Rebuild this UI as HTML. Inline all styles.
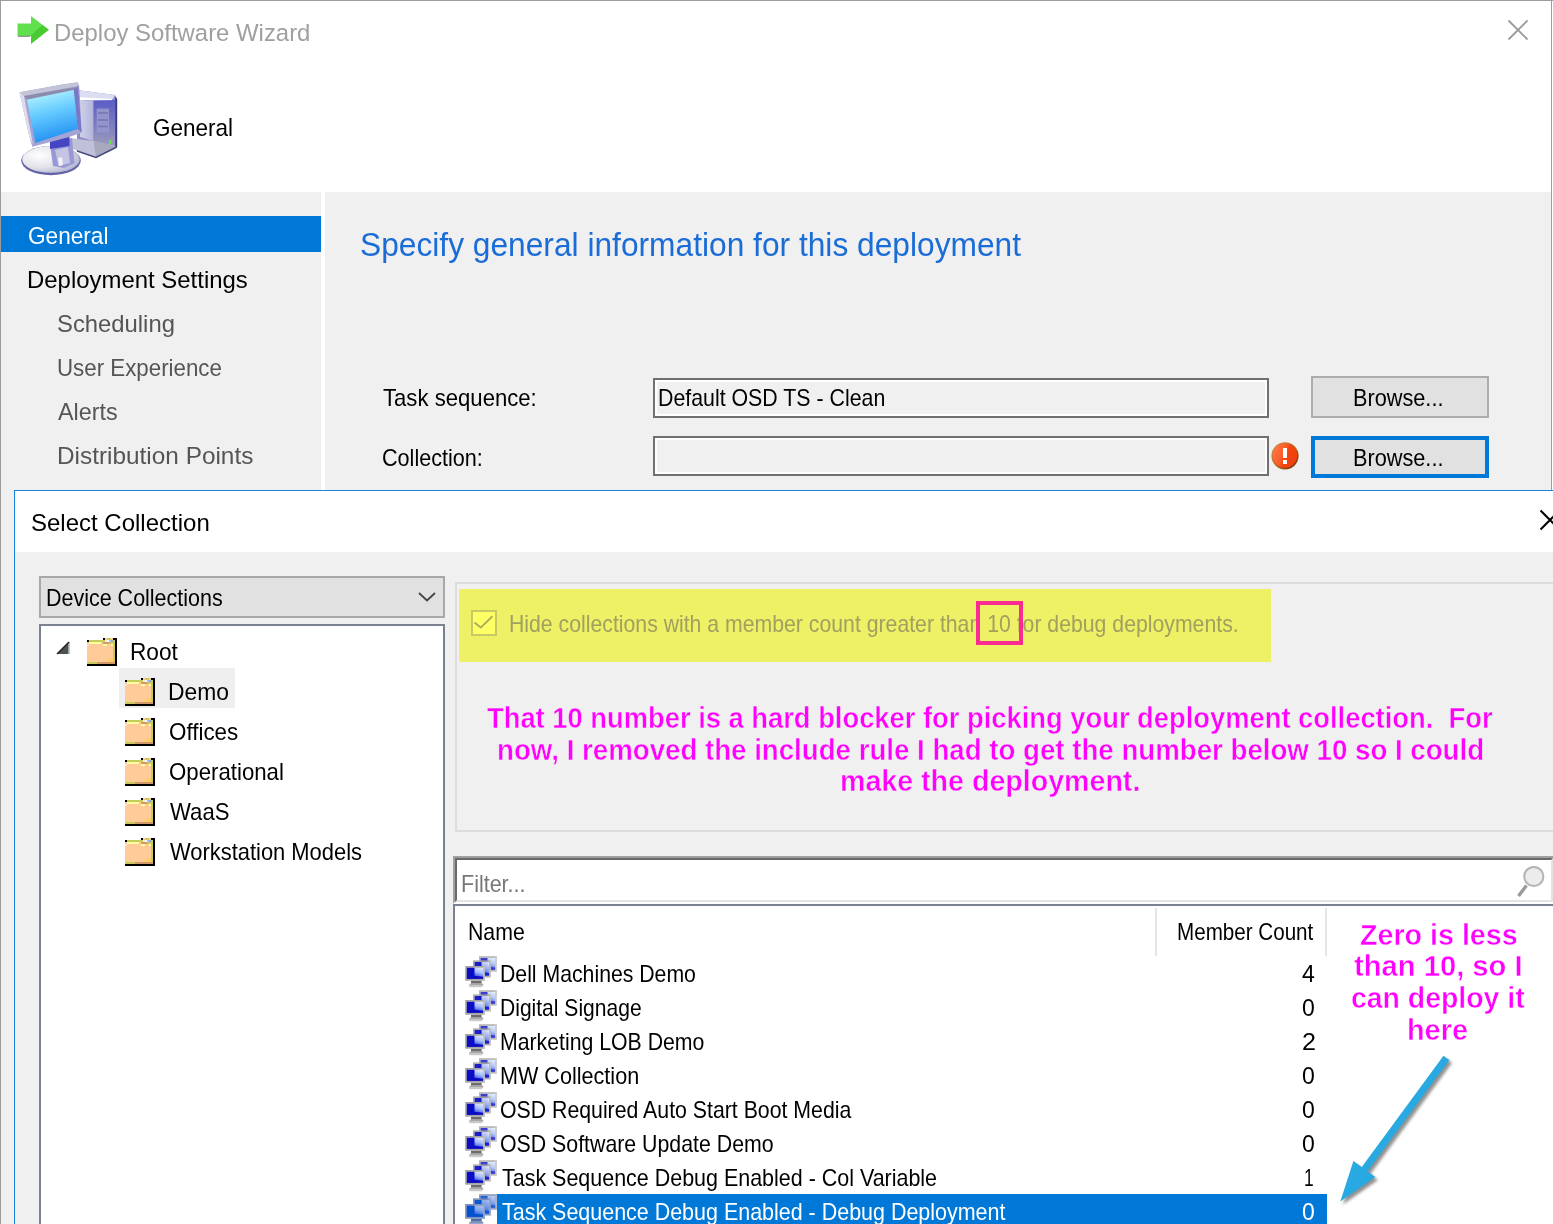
<!DOCTYPE html>
<html lang="en"><head><meta charset="utf-8"><title>Deploy Software Wizard</title>
<style>
html,body{margin:0;padding:0;}
body{width:1553px;height:1224px;position:relative;overflow:hidden;background:#fff;font-family:"Liberation Sans",sans-serif;}
.a{position:absolute;box-sizing:border-box;}
.t{position:absolute;white-space:pre;transform-origin:0 0;font-family:"Liberation Sans",sans-serif;}
svg{position:absolute;overflow:visible;}

</style></head>
<body>
<svg width="0" height="0" style="position:absolute"><defs><symbol id="fold" viewBox="0 0 30 28"><rect x="16" y="0" width="2" height="2" fill="#000000"/><rect x="18" y="0" width="2" height="2" fill="#ffcc99"/><rect x="20" y="0" width="4" height="2" fill="#c8cc5c"/><rect x="24" y="0" width="2" height="2" fill="#ffcc99"/><rect x="26" y="0" width="4" height="2" fill="#000000"/><rect x="0" y="2" width="2" height="2" fill="#000000"/><rect x="2" y="2" width="16" height="2" fill="#c8cc5c"/><rect x="18" y="2" width="2" height="2" fill="#ffe8e0"/><rect x="20" y="2" width="2" height="2" fill="#ffffff"/><rect x="22" y="2" width="2" height="2" fill="#a0c0ff"/><rect x="24" y="2" width="2" height="2" fill="#a0a8c0"/><rect x="26" y="2" width="2" height="2" fill="#c8cc5c"/><rect x="28" y="2" width="2" height="2" fill="#000000"/><rect x="0" y="4" width="2" height="2" fill="#ffcc99"/><rect x="2" y="4" width="12" height="2" fill="#ffff99"/><rect x="14" y="4" width="2" height="2" fill="#ffcc99"/><rect x="16" y="4" width="6" height="2" fill="#d2996a"/><rect x="22" y="4" width="6" height="2" fill="#c8cc5c"/><rect x="28" y="4" width="2" height="2" fill="#000000"/><rect x="0" y="6" width="2" height="2" fill="#fde0c8"/><rect x="2" y="6" width="14" height="2" fill="#ffcc99"/><rect x="16" y="6" width="4" height="2" fill="#ffff99"/><rect x="20" y="6" width="4" height="2" fill="#ffcc99"/><rect x="24" y="6" width="2" height="2" fill="#ffff99"/><rect x="26" y="6" width="2" height="2" fill="#c8cc5c"/><rect x="28" y="6" width="2" height="2" fill="#000000"/><rect x="0" y="8" width="26" height="2" fill="#ffcc99"/><rect x="26" y="8" width="2" height="2" fill="#c8cc5c"/><rect x="28" y="8" width="2" height="2" fill="#000000"/><rect x="0" y="10" width="26" height="2" fill="#ffcc99"/><rect x="26" y="10" width="2" height="2" fill="#c8cc5c"/><rect x="28" y="10" width="2" height="2" fill="#000000"/><rect x="0" y="12" width="26" height="2" fill="#ffcc99"/><rect x="26" y="12" width="2" height="2" fill="#c8cc5c"/><rect x="28" y="12" width="2" height="2" fill="#000000"/><rect x="0" y="14" width="26" height="2" fill="#ffcc99"/><rect x="26" y="14" width="2" height="2" fill="#c8cc5c"/><rect x="28" y="14" width="2" height="2" fill="#000000"/><rect x="0" y="16" width="26" height="2" fill="#ffcc99"/><rect x="26" y="16" width="2" height="2" fill="#c8cc5c"/><rect x="28" y="16" width="2" height="2" fill="#000000"/><rect x="0" y="18" width="26" height="2" fill="#ffcc99"/><rect x="26" y="18" width="2" height="2" fill="#c8cc5c"/><rect x="28" y="18" width="2" height="2" fill="#000000"/><rect x="0" y="20" width="22" height="2" fill="#ffcc99"/><rect x="22" y="20" width="4" height="2" fill="#ffcc66"/><rect x="26" y="20" width="2" height="2" fill="#c8cc5c"/><rect x="28" y="20" width="2" height="2" fill="#000000"/><rect x="0" y="22" width="18" height="2" fill="#ffcc99"/><rect x="18" y="22" width="8" height="2" fill="#ffcc66"/><rect x="26" y="22" width="2" height="2" fill="#c8cc5c"/><rect x="28" y="22" width="2" height="2" fill="#000000"/><rect x="0" y="24" width="10" height="2" fill="#c8cc5c"/><rect x="10" y="24" width="18" height="2" fill="#d2996a"/><rect x="28" y="24" width="2" height="2" fill="#000000"/><rect x="0" y="26" width="30" height="2" fill="#000000"/></symbol><symbol id="coll" viewBox="0 0 33 32"><defs><linearGradient id="mg" x1="0.9" y1="0" x2="0.5" y2="1"><stop offset="0" stop-color="#e4ecff"/><stop offset="0.45" stop-color="#a0b8fc"/><stop offset="0.85" stop-color="#3048dc"/><stop offset="1" stop-color="#1818c8"/></linearGradient></defs><g opacity="0.8"><rect x="14" y="0.2" width="17.8" height="15.4" fill="#a4a4a4"/><rect x="30.2" y="0.2" width="1.6" height="15.4" fill="#c4c4c4"/><rect x="15.7" y="1.9" width="14.4" height="11.8" fill="url(#mg)"/><path d="M15.7 1.9 h6.8 v8.5 l7.6 1.2 v2.1 h-14.4 z" fill="#0c0cc4"/></g><g opacity="0.92"><rect x="8" y="4.4" width="17.8" height="17" fill="#a4a4a4"/><rect x="24.2" y="4.4" width="1.6" height="17" fill="#c4c4c4"/><rect x="9.7" y="6.1" width="14.4" height="13.4" fill="url(#mg)"/><path d="M9.7 6.1 h6.8 v9.6 l7.6 1.3 v2.4 h-14.4 z" fill="#0c0cc4"/></g><rect x="6" y="24.7" width="10.6" height="2.8" fill="#6c6c6c"/><path d="M5.5 27.4 h12 l1 2 h-14.5 z" fill="#909090"/><rect x="4.2" y="28.6" width="13" height="2.6" fill="#c8c8c8"/><g opacity="1.0"><rect x="0.2" y="10" width="19.6" height="14.7" fill="#a4a4a4"/><rect x="18.2" y="10" width="1.6" height="14.7" fill="#c4c4c4"/><rect x="1.9" y="11.7" width="16.2" height="11.1" fill="url(#mg)"/><path d="M1.9 11.7 h7.6 v8.0 l8.6 1.1 v2.0 h-16.2 z" fill="#0c0cc4"/></g></symbol></defs></svg>
<!-- ===== wizard window frame ===== -->
<div class="a" style="left:0;top:0;width:1553px;height:1px;background:#9a9ea3"></div>
<div class="a" style="left:0;top:0;width:1px;height:1224px;background:#9c9c9c"></div>
<div class="a" style="left:1551px;top:0;width:1px;height:491px;background:#9a9ea3"></div>
<!-- gray panels -->
<div class="a" style="left:1px;top:192px;width:320px;height:1032px;background:#f0f0f0"></div>
<div class="a" style="left:325px;top:192px;width:1226px;height:300px;background:#f0f0f0"></div>
<!-- selected nav item -->
<div class="a" style="left:1px;top:216px;width:320px;height:36px;background:#0078d7"></div>
<!-- text boxes -->
<div class="a" style="left:653px;top:378px;width:616px;height:40px;border:2px solid #707070;background:#f0f0f0;box-shadow:inset 0 0 0 2px #fff"></div>
<div class="a" style="left:653px;top:436px;width:616px;height:40px;border:2px solid #707070;background:#f0f0f0;box-shadow:inset 0 0 0 2px #fff"></div>
<!-- buttons -->
<div class="a" style="left:1311px;top:376px;width:178px;height:42px;border:2px solid #adadad;background:#e1e1e1"></div>
<div class="a" style="left:1311px;top:436px;width:178px;height:42px;border:4px solid #0078d7;background:#e1e1e1"></div>
<!-- error icon -->
<svg style="left:1269px;top:440px" width="32" height="32" viewBox="1269 440 32 32">
<defs><linearGradient id="eg" x1="0" y1="0.2" x2="1" y2="0.6"><stop offset="0" stop-color="#ff7a4c"/><stop offset="0.45" stop-color="#fb5a28"/><stop offset="0.6" stop-color="#f2440e"/><stop offset="1" stop-color="#ee400c"/></linearGradient>
<linearGradient id="er" x1="0" y1="0" x2="1" y2="1"><stop offset="0" stop-color="#d89050"/><stop offset="0.5" stop-color="#c06818"/><stop offset="1" stop-color="#6a2008"/></linearGradient></defs>
<circle cx="1285" cy="455.8" r="13.6" fill="url(#er)"/>
<circle cx="1285" cy="455.6" r="12.2" fill="url(#eg)"/>
<rect x="1283" y="448" width="4" height="10" fill="#fff"/><rect x="1283" y="460" width="4" height="4" fill="#fff"/>
</svg>
<!-- close X (wizard) -->
<svg style="left:1508px;top:20px" width="20" height="20" viewBox="0 0 20 20"><path d="M0.5 0.5 L19.5 19.5 M19.5 0.5 L0.5 19.5" stroke="#9a9a9a" stroke-width="1.8" fill="none"/></svg>
<!-- green arrow -->
<svg style="left:16px;top:14px" width="34" height="32" viewBox="16 14 34 32">
<defs><linearGradient id="ga" x1="0" y1="0" x2="1" y2="1"><stop offset="0" stop-color="#5fe04a"/><stop offset="0.55" stop-color="#62e050"/><stop offset="0.56" stop-color="#48cc32"/><stop offset="1" stop-color="#48cc32"/></linearGradient></defs>
<path d="M17.5 23.5 H31 V16 L49 29.7 L31 44 V36 H17.5 Z" fill="url(#ga)"/>
<path d="M18 36.3 H30" stroke="#8a8a8a" stroke-width="1.2"/>
</svg>

<!-- ===== select collection dialog ===== -->
<div class="a" style="left:14px;top:490px;width:1539px;height:734px;background:#f0f0f0;border-left:1px solid #1883d7;border-top:1px solid #1883d7"></div>
<div class="a" style="left:15px;top:491px;width:1538px;height:61px;background:#fff"></div>
<svg style="left:1540px;top:510px" width="20" height="20" viewBox="0 0 20 20"><path d="M0.5 0.5 L19.5 19.5 M19.5 0.5 L0.5 19.5" stroke="#000" stroke-width="2" fill="none"/></svg>
<!-- combo -->
<div class="a" style="left:39px;top:576px;width:406px;height:42px;border:2px solid #a8a8a8;background:#e1e1e1"></div>
<svg style="left:418px;top:592px" width="18" height="10" viewBox="0 0 18 10"><path d="M1 1 L9 8.5 L17 1" stroke="#444" stroke-width="1.8" fill="none"/></svg>
<!-- tree -->
<div class="a" style="left:39px;top:624px;width:406px;height:610px;border:2px solid #7a8290;background:#fff"></div>
<div class="a" style="left:119px;top:668px;width:116px;height:40px;background:#efefef"></div>
<!-- group box -->
<div class="a" style="left:455px;top:582px;width:1110px;height:250px;border:2px solid #dcdcdc;"></div>
<div class="a" style="left:459px;top:589px;width:812px;height:73px;background:#eef066"></div>
<div class="a" style="left:471px;top:610px;width:26px;height:26px;border:2px solid #c8c864;background:#ffff66"></div>
<svg style="left:471px;top:610px" width="26" height="26" viewBox="471 610 26 26"><path d="M474.4 622.6 L480.8 627.6 L492.4 616.2" stroke="#adad5c" stroke-width="1.9" fill="none"/></svg>
<div class="a" style="left:976px;top:601px;width:47px;height:44px;border:4px solid #fb2b92;z-index:3"></div>
<!-- filter -->
<div class="a" style="left:454px;top:856px;width:1110px;height:47px;background:#fff;border-top:3px solid #696969;border-left:3px solid #696969;border-bottom:2px solid #e3e3e3"></div>
<!-- list -->
<div class="a" style="left:453px;top:904px;width:1111px;height:330px;background:#fff;border:2px solid #7a8290"></div>
<div class="a" style="left:1155px;top:908px;width:2px;height:48px;background:#e5e5e5"></div>
<div class="a" style="left:1325px;top:908px;width:2px;height:48px;background:#e5e5e5"></div>
<div class="a" style="left:497px;top:1194px;width:830px;height:30px;background:#0078d7"></div>
<!-- filter box 3D border overlay -->
<div class="a" style="left:453px;top:856px;width:1100px;height:48px;background:#fff;border-top:2px solid #a0a0a0;border-left:2px solid #a0a0a0;border-bottom:2px solid #fff;border-right:0"></div>
<div class="a" style="left:455px;top:858px;width:1098px;height:44px;background:#fff;border-top:2px solid #696969;border-left:2px solid #696969;border-bottom:2px solid #e3e3e3;border-right:2px solid #e3e3e3"></div>
<!-- magnifier -->
<svg style="left:1514px;top:864px" width="36" height="36" viewBox="1514 864 36 36">
<line x1="1526.5" y1="885.5" x2="1518.5" y2="896" stroke="#9a9a9a" stroke-width="3.4"/>
<circle cx="1533.8" cy="876.5" r="9.6" fill="#ececec" stroke="#b4b4b4" stroke-width="2"/>
</svg>
<!-- blue arrow -->
<svg style="left:0;top:0" width="1553" height="1224" viewBox="0 0 1553 1224">
<defs><filter id="sh" x="-20%" y="-20%" width="140%" height="140%"><feGaussianBlur stdDeviation="1.6"/></filter></defs>
<g transform="translate(2.6,3)" filter="url(#sh)" opacity="0.5"><path d="M1446.4 1057.9 L1364.5 1169.3" stroke="#222" stroke-width="7.2" fill="none"/><path d="M1340.3 1201.6 L1353.4 1161 L1375.3 1177 Z" fill="#222"/></g>
<path d="M1446.4 1057.9 L1364.5 1169.3" stroke="#29a9e1" stroke-width="7.2" fill="none"/><path d="M1340.3 1201.6 L1353.4 1161 L1375.3 1177 Z" fill="#29a9e1"/>
</svg>
<!-- tree icons -->
<svg style="left:57px;top:642px" width="12" height="12" viewBox="0 0 12 12"><path d="M12 0 V12 H0 Z" fill="#4a5252"/><path d="M12 0 V12" stroke="#b8b8b8" stroke-width="1.6"/><path d="M12 0 L0 12" stroke="#222" stroke-width="1.5"/></svg>
<svg style="left:87px;top:638px" width="30" height="28" shape-rendering="crispEdges"><use href="#fold"/></svg>
<svg style="left:125px;top:678px" width="30" height="28" shape-rendering="crispEdges"><use href="#fold"/></svg>
<svg style="left:125px;top:718px" width="30" height="28" shape-rendering="crispEdges"><use href="#fold"/></svg>
<svg style="left:125px;top:758px" width="30" height="28" shape-rendering="crispEdges"><use href="#fold"/></svg>
<svg style="left:125px;top:798px" width="30" height="28" shape-rendering="crispEdges"><use href="#fold"/></svg>
<svg style="left:125px;top:838px" width="30" height="28" shape-rendering="crispEdges"><use href="#fold"/></svg>
<!-- collection row icons -->
<svg style="left:465px;top:956px" width="33" height="32"><use href="#coll"/></svg>
<svg style="left:465px;top:990px" width="33" height="32"><use href="#coll"/></svg>
<svg style="left:465px;top:1024px" width="33" height="32"><use href="#coll"/></svg>
<svg style="left:465px;top:1058px" width="33" height="32"><use href="#coll"/></svg>
<svg style="left:465px;top:1092px" width="33" height="32"><use href="#coll"/></svg>
<svg style="left:465px;top:1126px" width="33" height="32"><use href="#coll"/></svg>
<svg style="left:465px;top:1160px" width="33" height="32"><use href="#coll"/></svg>
<svg style="left:465px;top:1194px" width="33" height="32"><defs><filter id="tint"><feFlood flood-color="#0078d7" flood-opacity="0.45" result="f"/><feComposite in="f" in2="SourceAlpha" operator="in" result="t"/><feMerge><feMergeNode in="SourceGraphic"/><feMergeNode in="t"/></feMerge></filter></defs><use href="#coll" filter="url(#tint)"/></svg>
<!-- big computer icon -->
<svg style="left:12px;top:76px" width="116" height="108" viewBox="12 76 116 108">
<defs>
<linearGradient id="scr" x1="0.35" y1="0" x2="0.6" y2="1"><stop offset="0" stop-color="#b4f4ff"/><stop offset="0.4" stop-color="#68ccff"/><stop offset="1" stop-color="#1a8af2"/></linearGradient>
<linearGradient id="twr" x1="0" y1="0" x2="0" y2="1"><stop offset="0" stop-color="#5c5cc8"/><stop offset="0.6" stop-color="#8080c0"/><stop offset="1" stop-color="#9c9cbc"/></linearGradient>
<linearGradient id="twl" x1="0" y1="0" x2="1" y2="0"><stop offset="0" stop-color="#d0d0ea"/><stop offset="1" stop-color="#b4b4dc"/></linearGradient>
<radialGradient id="bas" cx="30%" cy="35%" r="85%"><stop offset="0" stop-color="#ffffff"/><stop offset="0.55" stop-color="#e0e0e8"/><stop offset="1" stop-color="#a4a4cc"/></radialGradient>
<filter id="bl" x="-10%" y="-10%" width="120%" height="120%"><feGaussianBlur stdDeviation="0.75"/></filter>
</defs>
<g filter="url(#bl)">
<!-- tower -->
<path d="M77 90 L115 95 L116.8 98 L116.8 147 L96 157.5 L77 151 Z" fill="#8c8cc8"/>
<path d="M77.5 90 L115 95 L112.5 99.5 L80 98 Z" fill="#dcdcf2"/>
<path d="M80 97.2 L112 99 L112 101 L80 100 Z" fill="#ffffff"/>
<path d="M80 100 L93.5 101 L93.5 141 L80 137 Z" fill="url(#twl)"/>
<path d="M93.5 100.5 L115.2 100 L115.2 146 L93.5 141 Z" fill="url(#twr)"/>
<path d="M96.7 108.6 H109 V132.5 H96.7 Z" fill="#9494cc"/>
<path d="M98 113 H108 M98 120 H108 M98 126.5 H108" stroke="#7474b4" stroke-width="1.6"/>
<path d="M115.2 97 L117.2 99 L117.2 147 L115.2 148 Z" fill="#3a3a80"/>
<path d="M70 138 L93.5 141 L115.2 146 L115.2 148 L96 157.5 L77 151 L70 147 Z" fill="#c0c0d8"/>
<path d="M93.5 141 L115.2 146 L115.2 148 L96 157.5 Z" fill="#a8a8bc"/>
<path d="M77 151 L96 157.5 L116.8 147" stroke="#48487c" stroke-width="1.6" fill="none"/>
<rect x="109" y="140" width="2.4" height="4" fill="#60e848"/>
<!-- base -->
<ellipse cx="51" cy="160.6" rx="29.8" ry="14.6" fill="#6464a8"/>
<ellipse cx="51" cy="159.4" rx="28.8" ry="13.4" fill="url(#bas)"/>
<!-- neck -->
<path d="M50 144 L72 138 L74.5 163 L64 168 L53 166 Z" fill="#9898d4"/>
<path d="M55 150 L68 147 L70 163 L58.5 166 Z" fill="#c4c4e4"/>
<path d="M58 158 L62 157 L63 165 L59 166 Z" fill="#f0f0f8"/>
<path d="M50 141 L69.5 136 L69.5 146 L50 149 Z" fill="#4444c4"/>
<!-- monitor frame -->
<path d="M19.5 92.3 L62 84.5 L77.7 82.2 L79.2 85.7 L81.7 132.5 L69.3 137 L32.3 146.8 L28.8 134 Z" fill="#a4a4d4"/>
<path d="M19.5 92.3 L77.7 82.2 L78.5 86 L24 96 Z" fill="#c4c4d8"/>
<path d="M24 96 L76 87 L74 90 L27 99.6 Z" fill="#8c8cac"/>
<path d="M19.5 92.3 L24 96 L33 145 L29 136 Z" fill="#dcdcea"/>
<path d="M73.7 90.1 L78 86 L81.7 132.5 L77.7 128.9 Z" fill="#7878c4"/>
<!-- screen -->
<path d="M27 99.8 L73.7 90.1 L77.7 128.9 L35.4 143 Z" fill="url(#scr)"/>
</g>
</svg>

<div id="texts">
<span class="t" style="left:53.80px;top:22.00px;font-size:23.7px;line-height:23.7px;color:#a0a0a0;transform:scaleX(1.0092);">Deploy Software Wizard</span>
<span class="t" style="left:153.30px;top:116.00px;font-size:24.8px;line-height:24.8px;color:#000;transform:scaleX(0.9070);">General</span>
<span class="t" style="left:27.90px;top:225.00px;font-size:23.7px;line-height:23.7px;color:#fff;transform:scaleX(0.9549);">General</span>
<span class="t" style="left:26.60px;top:269.00px;font-size:23.7px;line-height:23.7px;color:#000;transform:scaleX(1.0102);">Deployment Settings</span>
<span class="t" style="left:56.80px;top:313.00px;font-size:23.7px;line-height:23.7px;color:#555;transform:scaleX(1.0061);">Scheduling</span>
<span class="t" style="left:57.00px;top:357.00px;font-size:23.7px;line-height:23.7px;color:#555;transform:scaleX(0.9419);">User Experience</span>
<span class="t" style="left:57.80px;top:401.00px;font-size:23.7px;line-height:23.7px;color:#555;transform:scaleX(0.9851);">Alerts</span>
<span class="t" style="left:57.00px;top:445.00px;font-size:23.7px;line-height:23.7px;color:#555;transform:scaleX(1.0287);">Distribution Points</span>
<span class="t" style="left:359.80px;top:227.00px;font-size:34px;line-height:34px;color:#1a6cd6;transform:scaleX(0.9327);">Specify general information for this deployment</span>
<span class="t" style="left:383.20px;top:386.00px;font-size:24px;line-height:24px;color:#000;transform:scaleX(0.9220);">Task sequence:</span>
<span class="t" style="left:381.50px;top:446.00px;font-size:24px;line-height:24px;color:#000;transform:scaleX(0.8991);">Collection:</span>
<span class="t" style="left:657.50px;top:386.00px;font-size:24px;line-height:24px;color:#000;transform:scaleX(0.8889);">Default OSD TS - Clean</span>
<span class="t" style="left:1353.40px;top:386.00px;font-size:24px;line-height:24px;color:#000;transform:scaleX(0.9042);">Browse...</span>
<span class="t" style="left:1353.40px;top:446.00px;font-size:24px;line-height:24px;color:#000;transform:scaleX(0.9042);">Browse...</span>
<span class="t" style="left:30.90px;top:511.00px;font-size:24.5px;line-height:24.5px;color:#000;transform:scaleX(0.9794);">Select Collection</span>
<span class="t" style="left:45.70px;top:586.00px;font-size:24px;line-height:24px;color:#000;transform:scaleX(0.8949);">Device Collections</span>
<span class="t" style="left:130.00px;top:640.00px;font-size:24px;line-height:24px;color:#000;transform:scaleX(0.9431);">Root</span>
<span class="t" style="left:168.00px;top:680.00px;font-size:24px;line-height:24px;color:#000;transform:scaleX(0.9526);">Demo</span>
<span class="t" style="left:169.00px;top:720.00px;font-size:24px;line-height:24px;color:#000;transform:scaleX(0.9320);">Offices</span>
<span class="t" style="left:169.00px;top:760.00px;font-size:24px;line-height:24px;color:#000;transform:scaleX(0.9262);">Operational</span>
<span class="t" style="left:170.00px;top:800.00px;font-size:24px;line-height:24px;color:#000;transform:scaleX(0.9223);">WaaS</span>
<span class="t" style="left:170.00px;top:840.00px;font-size:24px;line-height:24px;color:#000;transform:scaleX(0.9129);">Workstation Models</span>
<span class="t" style="left:508.60px;top:612.00px;font-size:24px;line-height:24px;color:#a0a060;transform:scaleX(0.8850);">Hide collections with a member count greater than 10 for debug deployments.</span>
<span class="t" style="left:486.70px;top:704.00px;font-size:29px;line-height:29px;color:#ff00ff;font-weight:700;-webkit-text-stroke:0.45px #f0f0f0;transform:scaleX(0.9426);">That 10 number is a hard blocker for picking your deployment collection.&nbsp; For</span>
<span class="t" style="left:496.50px;top:736.00px;font-size:29px;line-height:29px;color:#ff00ff;font-weight:700;-webkit-text-stroke:0.45px #f0f0f0;transform:scaleX(0.9537);">now, I removed the include rule I had to get the number below 10 so I could</span>
<span class="t" style="left:840.00px;top:767.00px;font-size:29px;line-height:29px;color:#ff00ff;font-weight:700;-webkit-text-stroke:0.45px #f0f0f0;transform:scaleX(0.9860);">make the deployment.</span>
<span class="t" style="left:461.40px;top:872.00px;font-size:24px;line-height:24px;color:#787878;transform:scaleX(0.8957);">Filter...</span>
<span class="t" style="left:468.00px;top:920.00px;font-size:24px;line-height:24px;color:#000;transform:scaleX(0.8870);">Name</span>
<span class="t" style="left:1176.70px;top:920.00px;font-size:24px;line-height:24px;color:#000;transform:scaleX(0.8586);">Member Count</span>
<span class="t" style="left:500.00px;top:962.00px;font-size:24px;line-height:24px;color:#000;transform:scaleX(0.8849);">Dell Machines Demo</span>
<span class="t" style="left:1302.00px;top:962.00px;font-size:24px;line-height:24px;color:#000;transform:scaleX(0.9601);">4</span>
<span class="t" style="left:500.00px;top:996.00px;font-size:24px;line-height:24px;color:#000;transform:scaleX(0.8772);">Digital Signage</span>
<span class="t" style="left:1302.00px;top:996.00px;font-size:24px;line-height:24px;color:#000;transform:scaleX(0.9601);">0</span>
<span class="t" style="left:500.00px;top:1030.00px;font-size:24px;line-height:24px;color:#000;transform:scaleX(0.8855);">Marketing LOB Demo</span>
<span class="t" style="left:1302.00px;top:1030.00px;font-size:24px;line-height:24px;color:#000;transform:scaleX(1.0474);">2</span>
<span class="t" style="left:500.00px;top:1064.00px;font-size:24px;line-height:24px;color:#000;transform:scaleX(0.8994);">MW Collection</span>
<span class="t" style="left:1302.00px;top:1064.00px;font-size:24px;line-height:24px;color:#000;transform:scaleX(0.9601);">0</span>
<span class="t" style="left:499.60px;top:1098.00px;font-size:24px;line-height:24px;color:#000;transform:scaleX(0.8866);">OSD Required Auto Start Boot Media</span>
<span class="t" style="left:1302.00px;top:1098.00px;font-size:24px;line-height:24px;color:#000;transform:scaleX(0.9601);">0</span>
<span class="t" style="left:499.60px;top:1132.00px;font-size:24px;line-height:24px;color:#000;transform:scaleX(0.8879);">OSD Software Update Demo</span>
<span class="t" style="left:1302.00px;top:1132.00px;font-size:24px;line-height:24px;color:#000;transform:scaleX(0.9601);">0</span>
<span class="t" style="left:502.00px;top:1166.00px;font-size:24px;line-height:24px;color:#000;transform:scaleX(0.8942);">Task Sequence Debug Enabled - Col Variable</span>
<span class="t" style="left:1303.60px;top:1166.00px;font-size:24px;line-height:24px;color:#000;transform:scaleX(0.7236);">1</span>
<span class="t" style="left:502.00px;top:1200.00px;font-size:24px;line-height:24px;color:#fff;transform:scaleX(0.8941);">Task Sequence Debug Enabled - Debug Deployment</span>
<span class="t" style="left:1302.00px;top:1200.00px;font-size:24px;line-height:24px;color:#fff;transform:scaleX(0.9601);">0</span>
<span class="t" style="left:1359.60px;top:921.00px;font-size:29px;line-height:29px;color:#ff00ff;font-weight:700;-webkit-text-stroke:0.45px #fff;transform:scaleX(0.9879);">Zero is less</span>
<span class="t" style="left:1354.40px;top:952.00px;font-size:29px;line-height:29px;color:#ff00ff;font-weight:700;-webkit-text-stroke:0.45px #fff;transform:scaleX(1.0061);">than 10, so I</span>
<span class="t" style="left:1351.00px;top:984.00px;font-size:29px;line-height:29px;color:#ff00ff;font-weight:700;-webkit-text-stroke:0.45px #fff;transform:scaleX(0.9796);">can deploy it</span>
<span class="t" style="left:1407.00px;top:1016.00px;font-size:29px;line-height:29px;color:#ff00ff;font-weight:700;-webkit-text-stroke:0.45px #fff;transform:scaleX(0.9948);">here</span>
</div>
</body></html>
